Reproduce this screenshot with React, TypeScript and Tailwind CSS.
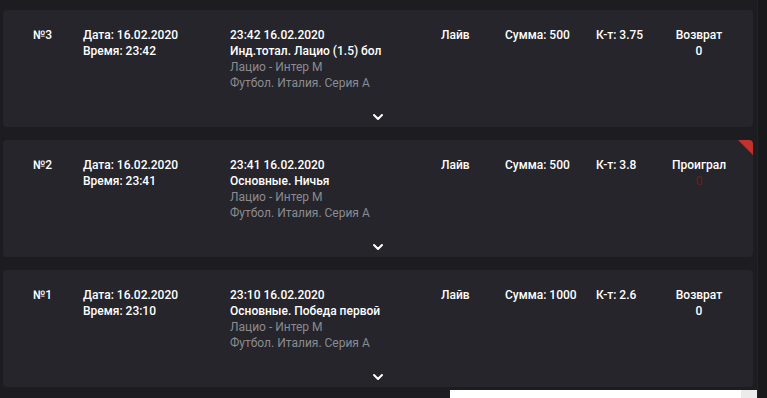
import { ChevronDown } from 'lucide-react'

type Bet = {
  num: number
  date: string
  time: string
  event: string
  market: string
  teams: string
  league: string
  sum: number
  coef: string
  status: string
  lost?: boolean
}

const bets: Bet[] = [
  {
    num: 3,
    date: '16.02.2020',
    time: '23:42',
    event: '23:42 16.02.2020',
    market: 'Инд.тотал. Лацио (1.5) бол',
    teams: 'Лацио - Интер М',
    league: 'Футбол. Италия. Серия А',
    sum: 500,
    coef: '3.75',
    status: 'Возврат',
  },
  {
    num: 2,
    date: '16.02.2020',
    time: '23:41',
    event: '23:41 16.02.2020',
    market: 'Основные. Ничья',
    teams: 'Лацио - Интер М',
    league: 'Футбол. Италия. Серия А',
    sum: 500,
    coef: '3.8',
    status: 'Проиграл',
    lost: true,
  },
  {
    num: 1,
    date: '16.02.2020',
    time: '23:10',
    event: '23:10 16.02.2020',
    market: 'Основные. Победа первой',
    teams: 'Лацио - Интер М',
    league: 'Футбол. Италия. Серия А',
    sum: 1000,
    coef: '2.6',
    status: 'Возврат',
  },
]

function BetCard({ bet }: { bet: Bet }) {
  return (
    <div className="relative flex h-[117px] flex-col justify-between overflow-hidden rounded-[4px] bg-[#25252b]">
      {bet.lost && (
        <div className="absolute right-0 top-0 h-0 w-0 border-l-[15px] border-t-[15px] border-l-transparent border-t-[#c4302b]" />
      )}

      <div className="flex pl-[30px] pt-[17px] text-[12px] leading-[16px] font-medium text-white">
        <div className="w-[50px]">№{bet.num}</div>
        <div className="w-[147px]">
          <p>Дата: {bet.date}</p>
          <p>Время: {bet.time}</p>
        </div>
        <div className="w-[211px]">
          <p>{bet.event}</p>
          <p>{bet.market}</p>
          <p className="font-normal text-[#8b8b90]">{bet.teams}</p>
          <p className="font-normal text-[#8b8b90]">{bet.league}</p>
        </div>
        <div className="w-[64px]">Лайв</div>
        <div className="w-[91px]">Сумма: {bet.sum}</div>
        <div className="w-[70px]">К-т: {bet.coef}</div>
        <div className="w-[66px] text-center">
          <p>{bet.status}</p>
          <p className={bet.lost ? 'font-normal text-[#6b1f1f]' : ''}>0</p>
        </div>
      </div>

      <div className="flex justify-center pb-[2px]">
        <ChevronDown className="h-[16px] w-[16px] text-white" strokeWidth={3} />
      </div>
    </div>
  )
}

export default function App() {
  return (
    <div
      className="flex h-[398px] w-[767px] overflow-hidden bg-[#1c1c21]"
      style={{ fontFamily: 'Roboto, "Liberation Sans", sans-serif' }}
    >
      <div className="flex w-[757px] flex-col pl-[3px] pr-[4px] pt-[10px]">
        <div className="flex flex-col gap-[13px]">
          {bets.map((bet) => (
            <BetCard key={bet.num} bet={bet} />
          ))}
        </div>
        <div className="ml-[447px] mt-[3px] flex h-[10px] w-[308px] bg-white">
          <div className="ml-auto w-[17px] bg-[#ececec]" />
        </div>
      </div>
      <div className="w-[10px] border-l border-[#222226] bg-[#19191c]" />
    </div>
  )
}
